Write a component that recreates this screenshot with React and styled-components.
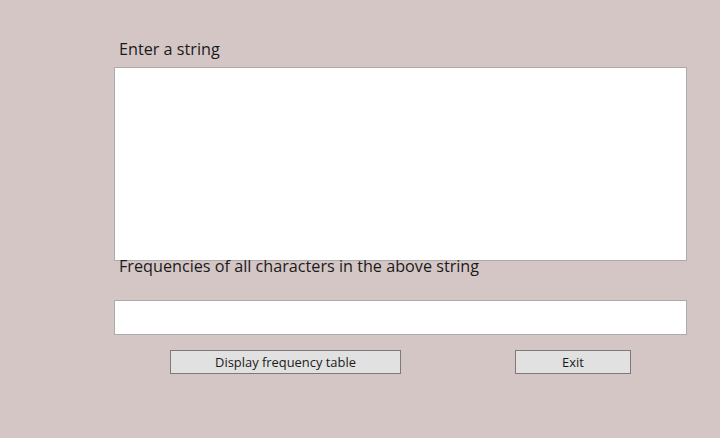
import React from "react";
import styled, { createGlobalStyle } from "styled-components";

const Global = createGlobalStyle`
  html, body { margin: 0; padding: 0; background: #d5c6c6; }
  body { font-family: "Open Sans", "Noto Sans", sans-serif; }
`;

const Window = styled.div`
  width: 720px;
  height: 438px;
  box-sizing: border-box;
  padding: 38px 33px 0 114px;
  display: flex;
  flex-direction: column;
  background: #d5c6c6;
`;

const Label = styled.div`
  font-size: 16.2px;
  line-height: 22px;
  color: #1a1a1a;
  padding-left: 5px;
  margin-top: ${(p) => p.$offset || 0}px;
  position: relative;
  height: 22px;
  white-space: nowrap;
`;

const TextBox = styled.div`
  box-sizing: border-box;
  width: 573px;
  height: ${(p) => p.$h}px;
  background: #ffffff;
  border: 1px solid #ababab;
  margin-top: ${(p) => p.$mt || 0}px;
`;

const ButtonRow = styled.div`
  display: flex;
  margin-top: 15px;
  padding-left: 56px;
  gap: 114px;
`;

const Button = styled.button`
  box-sizing: border-box;
  width: ${(p) => p.$w}px;
  height: 24px;
  background: #e1e1e1;
  border: 1px solid #7a7a7a;
  font-family: "Open Sans", "Noto Sans", sans-serif;
  font-size: 12.9px;
  line-height: 20px;
  color: #1a1a1a;
  padding: 0 0 1px;
`;

export default function App() {
  return (
    <>
      <Global />
      <Window>
        <Label>Enter a string</Label>
        <TextBox $h={194} $mt={7} />
        <Label $offset={-6}>Frequencies of all characters in the above string</Label>
        <TextBox $h={35} $mt={23} />
        <ButtonRow>
          <Button $w={231}>Display frequency table</Button>
          <Button $w={116}>Exit</Button>
        </ButtonRow>
      </Window>
    </>
  );
}
